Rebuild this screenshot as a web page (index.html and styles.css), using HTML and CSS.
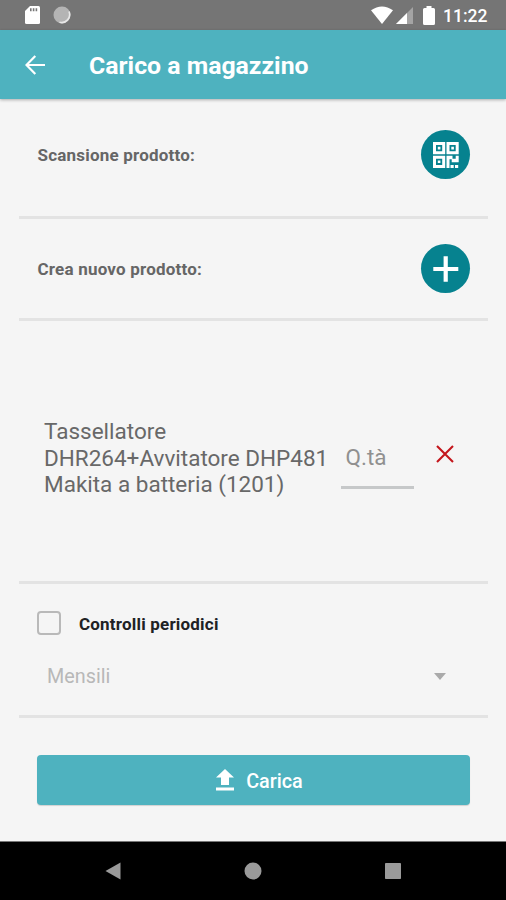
FILE: index.html
```html
<!DOCTYPE html>
<html lang="it">
<head>
<meta charset="utf-8">
<meta name="viewport" content="width=device-width, initial-scale=1">
<title>Carico a magazzino</title>
<link rel="stylesheet" href="styles.css">
</head>
<body>
<div class="screen">
  <div class="status">
    <svg class="sd" width="16" height="20" viewBox="0 0 16 20"><path fill="#fff" d="M6 1h8.500a1.500 1.500 0 0 1 1.500 1.500v15a1.500 1.500 0 0 1-1.500 1.500h-12A1.500 1.500 0 0 1 1 17.500V6z"/><path fill="#777" d="M6 3.200h1.600v3H6zM8.800 3.200h1.600v3H8.800zM11.600 3.200h1.600v3h-1.600z"/></svg>
    <svg class="sync" width="18" height="18" viewBox="0 0 18 18"><circle cx="9" cy="9" r="8.500" fill="#b4b4b4"/><path d="M16 5.500A8 8 0 0 1 6.500 16.300" fill="none" stroke="#e8e8e8" stroke-width="1.600"/></svg>
    <svg class="wifi" width="22" height="18" viewBox="0 0 22 18"><path fill="#fff" d="M0 4.200Q11-3.400 22 4.200L11 18z"/></svg>
    <svg class="cell" width="17" height="17" viewBox="0 0 17 17"><path fill="#a4a4a4" d="M17 0v17H0z"/><path fill="#fff" d="M11 6v11H0z"/></svg>
    <svg class="battery" width="12" height="19" viewBox="0 0 12 19"><path fill="#fff" d="M3.500 0h5v2H10.500A1.500 1.500 0 0 1 12 3.500v14A1.500 1.500 0 0 1 10.500 19h-9A1.500 1.500 0 0 1 0 17.500v-14A1.500 1.500 0 0 1 1.500 2h2z"/></svg>
    <span class="time">11:22</span>
  </div>
  <header class="bar">
    <svg class="back" width="20" height="20" viewBox="0 0 20 20"><path d="M20 10H1.800M10.300 1L1.500 10l8.800 9" fill="none" stroke="#fff" stroke-width="2.200"/></svg>
    <h1>Carico a magazzino</h1>
  </header>
  <main>
    <section class="row scan">
      <span class="label">Scansione prodotto:</span>
      <button class="round" aria-label="Scansiona">
        <svg width="26" height="26" viewBox="0 0 26 26" fill="#fff"><path fill-rule="evenodd" d="M0 0h12.200v12.200H0zM3 3v6.200h6.200V3zM13.500 0h12.200v12.200H13.500zM16.500 3v6.200h6.200V3zM0 13.700h12.200v12.200H0zM3 16.700v6.200h6.200v-6.200z"/><path d="M4.800 4.800h2.600v2.600H4.800zM18.300 4.800h2.600v2.600h-2.600zM4.800 18.500h2.600v2.600H4.800zM13.500 13.700h6v3h3.200v-3h3v6.500h-7v-3h-2.200v8.700h-3zM17.500 23h3.200v3h-3.200zM22 23h3.200v3H22z"/></svg>
      </button>
    </section>
    <section class="row create">
      <span class="label">Crea nuovo prodotto:</span>
      <button class="round" aria-label="Crea">
        <svg width="26" height="26" viewBox="0 0 26 26"><path d="M12.700.300v25.400M.300 13h25" stroke="#fff" stroke-width="4.200"/></svg>
      </button>
    </section>
    <section class="product">
      <p class="name">Tassellatore<br>DHR264+Avvitatore DHP481<br>Makita a batteria (1201)</p>
      <div class="qty">Q.tà</div>
      <svg class="remove" width="18" height="18" viewBox="0 0 18 18"><path d="M1 1l16 16M17 1L1 17" stroke="#c4161c" stroke-width="2.100"/></svg>
    </section>
    <section class="checks">
      <div class="check"><span class="box"></span><span class="check-label">Controlli periodici</span></div>
      <div class="select"><span>Mensili</span><svg width="12" height="7" viewBox="0 0 12 7"><path d="M0 0h12L6 7z" fill="#aaa"/></svg></div>
    </section>
    <button class="submit">
      <svg width="18" height="22" viewBox="0 0 18 22"><path fill="#fff" d="M9 0l9 8.500h-5V16H5V8.500H0zM0 18.500h18V21.500H0z"/></svg>
      <span>Carica</span>
    </button>
  </main>
  <nav>
    <svg width="16" height="18" viewBox="0 0 16 18"><path d="M.500 9L15.500.500v17z" fill="#9a9a9a"/></svg>
    <svg width="18" height="18" viewBox="0 0 18 18"><circle cx="9" cy="9" r="8.500" fill="#9a9a9a"/></svg>
    <svg width="16" height="16" viewBox="0 0 16 16"><rect width="16" height="16" rx=".8" fill="#9a9a9a"/></svg>
  </nav>
</div>
</body>
</html>
```
FILE: styles.css
```css
* { box-sizing: border-box; }
body { margin: 0; font-family: Roboto, "Liberation Sans", sans-serif; background: #f5f5f5; }
svg { display: block; flex: none; }
button { border: 0; padding: 0; font: inherit; }
.screen { width: 506px; height: 900px; display: flex; flex-direction: column; overflow: hidden; }
.status { height: 30px; flex: none; background: #757575; display: flex; align-items: center; padding: 0 18px 0 24px; }
.sync { margin-left: 13px; }
.wifi { margin-left: auto; }
.cell { margin: 1px 0 0 3px; }
.battery { margin-left: 10px; }
.time { width: 45px; margin: 2px 0 0 8px; color: #fff; font-size: 17.500px; font-weight: 500; line-height: 20px; white-space: nowrap; }
.bar { height: 69px; flex: none; background: #4eb2bf; display: flex; align-items: center; padding-left: 25px; box-shadow: 0 1px 3px rgba(0,0,0,.3); position: relative; }
.bar h1 { margin: 3px 0 0 44px; color: #fff; font-size: 24.800px; line-height: 30px; font-weight: 700; white-space: nowrap; }
main { flex: 1; padding: 0 18px 0 19px; display: flex; flex-direction: column; }
.row, .product, .checks { border-bottom: 3px solid #e3e3e3; }
.row { display: flex; justify-content: space-between; align-items: flex-start; padding: 0 18px 0 18.500px; }
.scan { height: 120px; padding-top: 31px; }
.create { height: 102px; padding-top: 25px; }
.label { color: #666; font-size: 17px; font-weight: 700; line-height: 50px; letter-spacing: .2px; white-space: nowrap; }
.round { width: 49px; height: 49px; border-radius: 50%; background: #06828f; display: flex; align-items: center; justify-content: center; }
.product { height: 263px; display: flex; padding: 97px 0 0 25px; }
.name { margin: 0; width: 297px; color: #686868; font-size: 22.500px; line-height: 26.700px; white-space: nowrap; }
.qty { width: 73px; height: 48px; margin-top: 23px; padding: 0 4.500px; border-bottom: 3px solid #c6c8c9; color: #909090; font-size: 22.500px; line-height: 32px; }
.remove { margin: 27px 0 0 22px; }
.checks { height: 134px; padding: 26px 42px 0 18px; }
.check { display: flex; align-items: center; height: 26px; }
.box { width: 24px; height: 24px; border: 2px solid #b9b9b9; border-radius: 4px; }
.check-label { margin: 2px 0 0 18px; color: #202124; font-size: 17px; font-weight: 700; letter-spacing: .2px; white-space: nowrap; }
.select { display: flex; align-items: center; justify-content: space-between; height: 30px; margin-top: 25px; padding-left: 10px; color: #b8b8b8; font-size: 19.800px; }
.submit { height: 50px; margin: 37px 18px 0 18px; flex: none; border-radius: 4px; background: #4eb2bf; color: #fff; font-size: 19.800px; font-weight: 500; display: flex; align-items: center; justify-content: center; gap: 12px; padding-left: 12px; box-shadow: 0 1px 1px rgba(0,0,0,.15); }
.submit span { padding-top: 2px; }
nav { height: 59px; flex: none; background: #000; border-top: 1px solid #777; display: flex; align-items: center; justify-content: space-between; padding: 0 105px; }
```
